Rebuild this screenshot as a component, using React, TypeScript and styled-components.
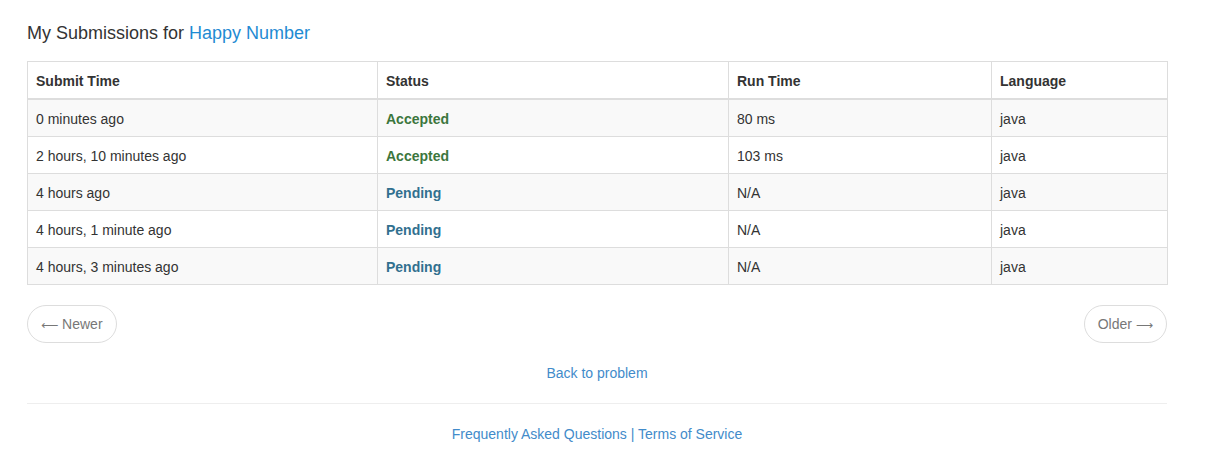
import React from "react";
import styled, { createGlobalStyle } from "styled-components";

const Global = createGlobalStyle`
  html, body { margin: 0; padding: 0; background: #fff; }
  body {
    font-family: "Liberation Sans", Arial, Helvetica, sans-serif;
    font-size: 14px;
    line-height: 20px;
    color: #333;
  }
  * { box-sizing: border-box; }
`;

const Container = styled.div`
  width: 1140px;
  margin-left: 27px;
  padding-top: 23px;
`;

const Title = styled.h3`
  margin: 0 0 18px;
  font-size: 18px;
  font-weight: normal;
  line-height: 20px;
  color: #333;
`;

const TitleLink = styled.a`
  color: #1f8bd3;
  text-decoration: none;
`;

const Table = styled.table`
  width: 1140px;
  border-collapse: collapse;
  border-spacing: 0;
  table-layout: fixed;
  border: 1px solid #ddd;
`;

const Th = styled.th`
  text-align: left;
  font-weight: bold;
  font-size: 14px;
  padding: 9px 8px 7px;
  line-height: 20px;
  border: 1px solid #ddd;
  border-bottom: 2px solid #ddd;
  color: #333;
`;

const Tr = styled.tr<{ $striped: boolean }>`
  background: ${(p) => (p.$striped ? "#f9f9f9" : "#fff")};
`;

const Td = styled.td`
  padding: 9px 8px 7px;
  line-height: 20px;
  border: 1px solid #ddd;
  vertical-align: top;
`;

const Status = styled.strong<{ $ok: boolean }>`
  color: ${(p) => (p.$ok ? "#3c763d" : "#31708f")};
  font-weight: bold;
`;

const Pager = styled.div`
  display: flex;
  justify-content: space-between;
  margin-top: 20px;
`;

const PagerButton = styled.a`
  display: inline-block;
  height: 38px;
  padding: 8px 13px;
  line-height: 20px;
  border: 1px solid #ddd;
  border-radius: 19px;
  color: #777;
  background: #fff;
  text-decoration: none;
`;

const Arrow = styled.span`
  font-family: "DejaVu Sans", sans-serif;
  font-size: 12px;
  line-height: 1;
`;

const Center = styled.div`
  text-align: center;
`;

const BackLink = styled.a`
  display: inline-block;
  margin-top: 20px;
  color: #428bca;
  text-decoration: none;
`;

const Rule = styled.hr`
  margin: 20px 0 20px;
  border: 0;
  border-top: 1px solid #eee;
`;

const Footer = styled.div`
  text-align: center;
  color: #428bca;
`;

const FooterLink = styled.a`
  color: #428bca;
  text-decoration: none;
`;

const rows = [
  { time: "0 minutes ago", status: "Accepted", run: "80 ms" },
  { time: "2 hours, 10 minutes ago", status: "Accepted", run: "103 ms" },
  { time: "4 hours ago", status: "Pending", run: "N/A" },
  { time: "4 hours, 1 minute ago", status: "Pending", run: "N/A" },
  { time: "4 hours, 3 minutes ago", status: "Pending", run: "N/A" },
];

export default function App() {
  return (
    <>
      <Global />
      <Container>
        <Title>
          My Submissions for <TitleLink href="#">Happy Number</TitleLink>
        </Title>
        <Table>
          <colgroup>
            <col style={{ width: 350 }} />
            <col style={{ width: 351 }} />
            <col style={{ width: 263 }} />
            <col style={{ width: 176 }} />
          </colgroup>
          <thead>
            <tr>
              <Th>Submit Time</Th>
              <Th>Status</Th>
              <Th>Run Time</Th>
              <Th>Language</Th>
            </tr>
          </thead>
          <tbody>
            {rows.map((r, i) => (
              <Tr key={i} $striped={i % 2 === 0}>
                <Td>{r.time}</Td>
                <Td>
                  <Status $ok={r.status === "Accepted"}>{r.status}</Status>
                </Td>
                <Td>{r.run}</Td>
                <Td>java</Td>
              </Tr>
            ))}
          </tbody>
        </Table>
        <Pager>
          <PagerButton href="#">
            <Arrow>⟵</Arrow> Newer
          </PagerButton>
          <PagerButton href="#">
            Older <Arrow>⟶</Arrow>
          </PagerButton>
        </Pager>
        <Center>
          <BackLink href="#">Back to problem</BackLink>
        </Center>
        <Rule />
        <Footer>
          <FooterLink href="#">Frequently Asked Questions</FooterLink> |{" "}
          <FooterLink href="#">Terms of Service</FooterLink>
        </Footer>
      </Container>
    </>
  );
}
